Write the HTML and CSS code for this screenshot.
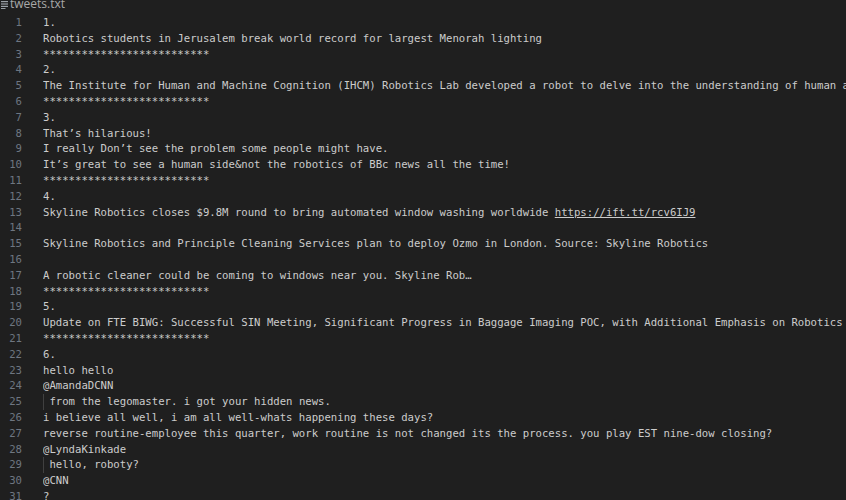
FILE: index.html
```html
<!DOCTYPE html>
<html>
<head>
<meta charset="utf-8">
<link rel="stylesheet" href="styles.css">
</head>
<body>
<div class="tab">
  <svg class="file-icon" width="7" height="8" viewBox="0 0 7 8"><rect x="0" y="0" width="7" height="1.2" fill="#9aa0a6"/><rect x="0" y="2.4" width="7" height="1.2" fill="#9aa0a6"/><rect x="0" y="4.8" width="7" height="1.2" fill="#9aa0a6"/><rect x="0" y="7" width="4.5" height="1" fill="#9aa0a6"/></svg>
  <span class="tab-name">tweets.txt</span>
</div>
<div class="editor">
  <div class="ln">1</div><div class="code">1.</div>
  <div class="ln">2</div><div class="code">Robotics students in Jerusalem break world record for largest Menorah lighting</div>
  <div class="ln">3</div><div class="code">**************************</div>
  <div class="ln">4</div><div class="code">2.</div>
  <div class="ln">5</div><div class="code">The Institute for Human and Machine Cognition (IHCM) Robotics Lab developed a robot to delve into the understanding of human and machine</div>
  <div class="ln">6</div><div class="code">**************************</div>
  <div class="ln">7</div><div class="code">3.</div>
  <div class="ln">8</div><div class="code">That’s hilarious!</div>
  <div class="ln">9</div><div class="code">I really Don’t see the problem some people might have.</div>
  <div class="ln">10</div><div class="code">It’s great to see a human side&amp;not the robotics of BBc news all the time!</div>
  <div class="ln">11</div><div class="code">**************************</div>
  <div class="ln">12</div><div class="code">4.</div>
  <div class="ln">13</div><div class="code">Skyline Robotics closes $9.8M round to bring automated window washing worldwide <span class="link">https://ift.tt/rcv6IJ9</span></div>
  <div class="ln">14</div><div class="code"></div>
  <div class="ln">15</div><div class="code">Skyline Robotics and Principle Cleaning Services plan to deploy Ozmo in London. Source: Skyline Robotics</div>
  <div class="ln">16</div><div class="code"></div>
  <div class="ln">17</div><div class="code">A robotic cleaner could be coming to windows near you. Skyline Rob…</div>
  <div class="ln">18</div><div class="code">**************************</div>
  <div class="ln">19</div><div class="code">5.</div>
  <div class="ln">20</div><div class="code">Update on FTE BIWG: Successful SIN Meeting, Significant Progress in Baggage Imaging POC, with Additional Emphasis on Robotics</div>
  <div class="ln">21</div><div class="code">**************************</div>
  <div class="ln">22</div><div class="code">6.</div>
  <div class="ln">23</div><div class="code">hello hello</div>
  <div class="ln">24</div><div class="code">@AmandaDCNN</div>
  <div class="ln">25</div><div class="code"><span class="indent"> </span>from the legomaster. i got your hidden news.</div>
  <div class="ln">26</div><div class="code">i believe all well, i am all well-whats happening these days?</div>
  <div class="ln">27</div><div class="code">reverse routine-employee this quarter, work routine is not changed its the process. you play EST nine-dow closing?</div>
  <div class="ln">28</div><div class="code">@LyndaKinkade</div>
  <div class="ln">29</div><div class="code"><span class="indent"> </span>hello, roboty?</div>
  <div class="ln">30</div><div class="code">@CNN</div>
  <div class="ln">31</div><div class="code">?</div>
</div>
</body>
</html>
```
FILE: styles.css
```css
html, body {
  margin: 0;
  padding: 0;
  background: #1f1f1f;
  width: 846px;
  height: 500px;
  overflow: hidden;
}
.tab {
  height: 15px;
  display: flex;
  align-items: flex-start;
  gap: 2px;
  padding-left: 1px;
  overflow: hidden;
  font-family: "Open Sans", "Noto Sans", sans-serif;
  font-size: 12px;
  color: #a8a8a8;
}
.file-icon {
  margin-top: 1px;
  flex: none;
}
.tab-name {
  line-height: 12px;
  margin-top: -2px;
}
.editor {
  display: grid;
  grid-template-columns: 22px 1fr;
  column-gap: 21px;
  font-family: "DejaVu Sans Mono", "Liberation Mono", monospace;
  font-size: 10.63px;
  line-height: 15.8px;
}
.ln {
  text-align: right;
  color: #6e7681;
  height: 15.8px;
}
.code {
  color: #cccccc;
  white-space: pre;
  overflow: hidden;
  height: 15.8px;
}
.link {
  text-decoration: underline;
}
.indent {
  display: inline-block;
  box-shadow: inset 1px 0 0 #404040;
}
```
